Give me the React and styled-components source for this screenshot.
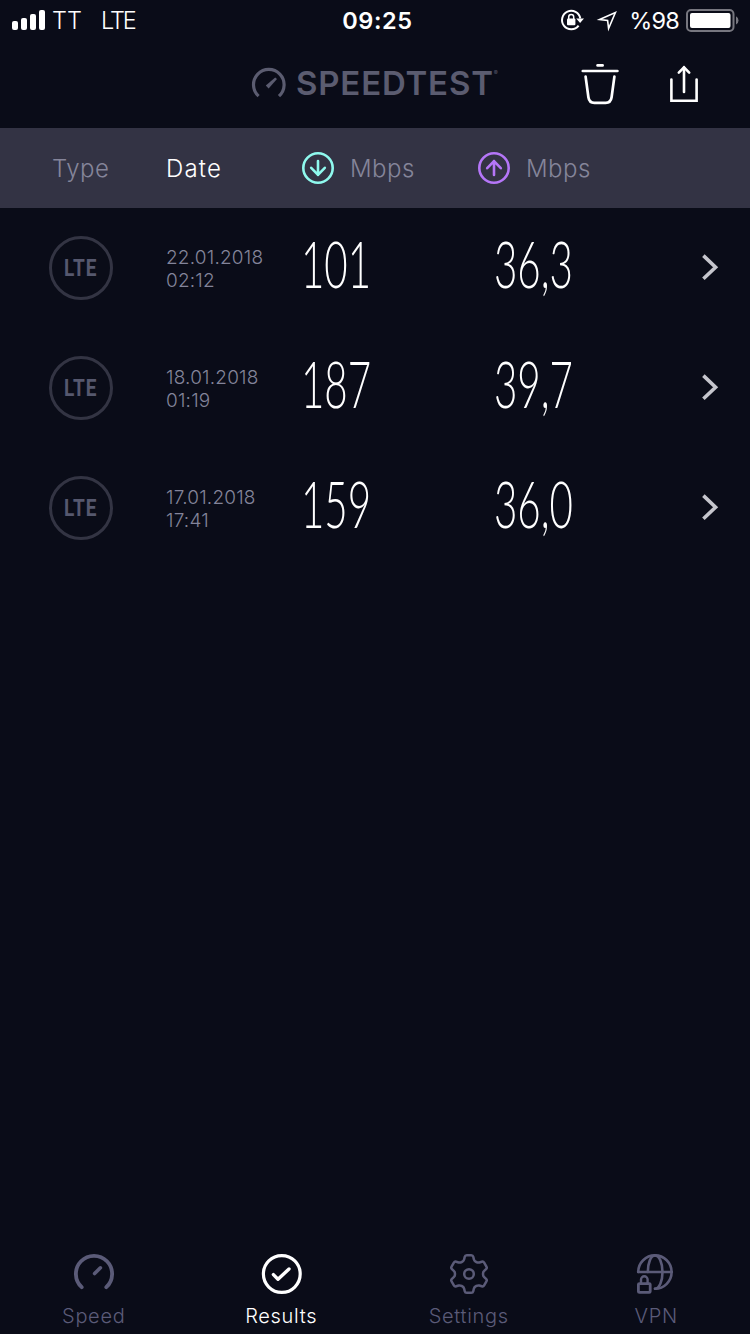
import React from 'react';
import styled, { createGlobalStyle, ThemeProvider } from 'styled-components';

const theme = {
  fontFamily: '"Inter", "Liberation Sans", sans-serif',
  numberFamily: '"Lato", "Liberation Sans", sans-serif',
  badgeFamily: '"Roboto", "Liberation Sans", sans-serif',
  colors: {
    background: '#0a0c18',
    bar: '#333344',
    white: '#ffffff',
    barText: '#85859a',
    date: '#83849a',
    logo: '#5b5c70',
    ring: '#333443',
    badge: '#56586e',
    tab: '#5b5b78',
    chevron: '#c6c6cd',
    download: '#8ff9ee',
    upload: '#b576f8',
  },
};

const RESULTS = [
  { type: 'LTE', date: '22.01.2018', time: '02:12', down: '101', up: '36,3' },
  { type: 'LTE', date: '18.01.2018', time: '01:19', down: '187', up: '39,7' },
  { type: 'LTE', date: '17.01.2018', time: '17:41', down: '159', up: '36,0' },
];

// one tooth and the valley after it, repeated six times around the hub
const GEAR_POINTS = [
  [-5.2, -13.2],
  [-3.9, -18.8],
  [3.9, -18.8],
  [5.2, -13.2],
];

const getGearPath = () => {
  const points = [];
  for (let i = 0; i < 6; i++) {
    const a = (i * Math.PI) / 3;
    GEAR_POINTS.forEach(([x, y]) => {
      points.push([
        x * Math.cos(a) - y * Math.sin(a),
        x * Math.sin(a) + y * Math.cos(a),
      ]);
    });
  }

  const toward = (from, to, distance) => {
    const length = Math.hypot(to[0] - from[0], to[1] - from[1]);
    const t = distance / length;
    return [from[0] + (to[0] - from[0]) * t, from[1] + (to[1] - from[1]) * t];
  };

  return (
    points
      .map((point, i) => {
        const prev = points[(i + points.length - 1) % points.length];
        const next = points[(i + 1) % points.length];
        const start = toward(point, prev, 1.6);
        const end = toward(point, next, 1.6);
        return `${i ? 'L' : 'M'}${start} Q${point} ${end}`;
      })
      .join(' ') + 'Z'
  );
};

const SignalIcon = () => (
  <Icon width="33" height="20" viewBox="12 10 33 20">
    <g fill="currentColor">
      <rect x="12" y="21" width="6" height="9" rx="2" />
      <rect x="21" y="18" width="6" height="12" rx="2" />
      <rect x="30" y="14" width="6" height="16" rx="2" />
      <rect x="39" y="10" width="6" height="20" rx="2" />
    </g>
  </Icon>
);

const LockRotationIcon = () => (
  <Icon width="24" height="22" viewBox="562 9 24 22">
    <path
      d="M580.6 25.6A9.2 9.2 0 1 1 582.3 18.5"
      stroke="currentColor"
      strokeWidth="2"
    />
    <path d="M578.2 18.5H586L582.1 23Z" fill="currentColor" />
    <rect x="569" y="18.6" width="8.4" height="6.6" rx="1" fill="currentColor" />
    <path
      d="M570.7 19V17a2.5 2.5 0 0 1 5 0V19"
      stroke="currentColor"
      strokeWidth="1.5"
    />
  </Icon>
);

const LocationIcon = () => (
  <Icon width="20" height="21" viewBox="598 9.5 20 21">
    <path
      d="M600.6 19L616.4 12L609.6 28L608.6 20Z"
      stroke="currentColor"
      strokeWidth="1.6"
    />
  </Icon>
);

const BatteryIcon = () => (
  <Icon width="53" height="24" viewBox="686 8 53 24">
    <rect
      x="687"
      y="10"
      width="46.5"
      height="21"
      rx="4"
      stroke="#77777f"
      strokeWidth="2"
    />
    <rect x="690" y="13" width="40.5" height="15" rx="2" fill="currentColor" />
    <path d="M736 16.3a4.6 4.6 0 0 1 0 8.2Z" fill="#77777f" />
  </Icon>
);

const GaugeLogo = () => (
  <Icon width="34" height="30" viewBox="252 68 34 30">
    <path
      d="M258.6 95.1A15.3 15.3 0 1 1 279 95.1"
      stroke="currentColor"
      strokeWidth="3.2"
    />
    <path d="M265.8 84.6L275.2 76.4L277 78.1L268.6 87.6Z" fill="currentColor" />
  </Icon>
);

const TrashIcon = () => (
  <Icon width="38" height="42" viewBox="581 63 38 42">
    <g stroke="currentColor" strokeWidth="2.7" strokeLinecap="round">
      <path d="M597.6 65.4H602.6" />
      <path d="M582.8 71H617.4" />
      <path d="M585.6 76.6L588.4 97.2Q589.2 102.8 594.4 102.8H605.6Q610.8 102.8 611.6 97.2L614.4 76.6" />
    </g>
  </Icon>
);

const ShareIcon = () => (
  <Icon width="30" height="38" viewBox="669 65 30 38">
    <g stroke="currentColor" strokeWidth="2.6" strokeLinecap="round">
      <path d="M671.4 79.5V100.8H696.6V79.5" />
      <path d="M684 67.5V92" />
      <path d="M678.8 72.6L684 67.4L689.2 72.6" />
    </g>
  </Icon>
);

const ArrowIcon = ({ up }) => (
  <Icon width="32" height="32" viewBox="-16 -16 32 32">
    <circle r="14.7" stroke="currentColor" strokeWidth="2.6" />
    <path
      d={up ? 'M0 7V-7M-6.8 .2L0 -6.8L6.8 .2' : 'M0 -7V7M-6.8 -.2L0 6.8L6.8 -.2'}
      stroke="currentColor"
      strokeWidth="2.6"
      strokeLinecap="round"
      strokeLinejoin="round"
    />
  </Icon>
);

const ChevronIcon = () => (
  <Icon width="18" height="28" viewBox="701 254 18 28">
    <path
      d="M703.4 255.6L715.6 267.2L703.4 278.8"
      stroke="currentColor"
      strokeWidth="3.6"
    />
  </Icon>
);

const SpeedIcon = () => (
  <Icon width="42" height="42" viewBox="-21 -21 42 42">
    <g stroke="currentColor" strokeLinecap="round">
      <path d="M-12.3 13.2A18.1 18.1 0 1 1 12.3 13.2" strokeWidth="3.8" />
      <path d="M.6 -.4L6.4 -6.2" strokeWidth="3.6" />
    </g>
  </Icon>
);

const ResultsIcon = () => (
  <Icon width="42" height="42" viewBox="-21.8 -21 42 42">
    <circle r="18.4" stroke="currentColor" strokeWidth="3.2" />
    <path
      d="M-8.4 .6L-3.8 5.2L7.2 -5"
      stroke="currentColor"
      strokeWidth="3.4"
      strokeLinecap="round"
      strokeLinejoin="round"
    />
  </Icon>
);

const SettingsIcon = () => (
  <Icon width="42" height="42" viewBox="-21 -21 42 42">
    <path d={getGearPath()} stroke="currentColor" strokeWidth="2.5" />
    <circle r="4.8" stroke="currentColor" strokeWidth="2.5" />
  </Icon>
);

const VpnIcon = () => (
  <Icon width="42" height="42" viewBox="635.2 1253 42 42">
    <g stroke="currentColor" strokeWidth="2.6" strokeLinecap="round">
      <path d="M638.4 1272A16.7 16.7 0 1 1 655.2 1288.8" />
      <path d="M638.4 1272H672" />
      <path d="M648 1272C648 1263 651 1255.5 655.1 1255.5C659.5 1255.5 662.7 1263 662.7 1272C662.7 1281 659.5 1288.6 655.2 1288.8" />
    </g>
    <rect
      x="638.6"
      y="1283.6"
      width="11.8"
      height="8.8"
      rx="1"
      stroke="currentColor"
      strokeWidth="2.8"
    />
    <path
      d="M641.2 1283V1279.6a3.3 3.3 0 0 1 6.6 0V1283"
      stroke="currentColor"
      strokeWidth="2.4"
    />
  </Icon>
);

const TABS = [
  { label: 'Speed', icon: SpeedIcon },
  { label: 'Results', icon: ResultsIcon, isActive: true },
  { label: 'Settings', icon: SettingsIcon },
  { label: 'VPN', icon: VpnIcon },
];

const App = () => (
  <ThemeProvider theme={theme}>
    <GlobalStyle />
    <Screen>
      <StatusBar>
        <StatusLeft>
          <SignalIcon />
          <Carrier>TT</Carrier>
          <Network>LTE</Network>
        </StatusLeft>
        <Clock>09:25</Clock>
        <StatusRight>
          <StatusIcons>
            <LockRotationIcon />
            <LocationIcon />
          </StatusIcons>
          <Percent>%98</Percent>
          <BatteryIcon />
        </StatusRight>
      </StatusBar>

      <Header>
        <Logo>
          <GaugeLogo />
          <LogoText>SPEEDTEST</LogoText>
          <Registered>®</Registered>
        </Logo>
        <Actions>
          <TrashIcon />
          <ShareIcon />
        </Actions>
      </Header>

      <ColumnBar>
        <ColumnLabel>Type</ColumnLabel>
        <ColumnLabel $isActive>Date</ColumnLabel>
        <UnitLabel $color="download">
          <ArrowIcon />
          <ColumnLabel>Mbps</ColumnLabel>
        </UnitLabel>
        <UnitLabel $color="upload">
          <ArrowIcon up />
          <ColumnLabel>Mbps</ColumnLabel>
        </UnitLabel>
      </ColumnBar>

      <ResultList>
        {RESULTS.map(({ type, date, time, down, up }) => (
          <ResultRow key={date}>
            <Badge>
              <span>{type}</span>
            </Badge>
            <DateCell>
              <div>{date}</div>
              <div>{time}</div>
            </DateCell>
            <Speed>{down}</Speed>
            <Speed $inset={17}>{up}</Speed>
            <ChevronIcon />
          </ResultRow>
        ))}
      </ResultList>

      <TabBar>
        {TABS.map(({ label, icon: TabIcon, isActive }) => (
          <Tab key={label} $isActive={isActive}>
            <TabIcon />
            <TabLabel>{label}</TabLabel>
          </Tab>
        ))}
      </TabBar>
    </Screen>
  </ThemeProvider>
);

const GlobalStyle = createGlobalStyle`
  * {
    box-sizing: border-box;
  }

  body {
    margin: 0;
    background: ${theme.colors.background};
  }
`;

const Icon = styled.svg.attrs({ fill: 'none' })`
  display: block;
  flex: none;
  overflow: visible;
`;

const Screen = styled.div`
  display: flex;
  flex-direction: column;
  width: 750px;
  height: 1334px;
  overflow: hidden;
  background: ${(props) => props.theme.colors.background};
  color: ${(props) => props.theme.colors.white};
  font-family: ${(props) => props.theme.fontFamily};
`;

const StatusBar = styled.div`
  display: grid;
  grid-template-columns: 1fr auto 1fr;
  align-items: center;
  height: 40px;
  padding: 0 11px 0 12px;
  font-size: 23.5px;
  line-height: 38px;

  span {
    padding-top: 2px;
  }
`;

const StatusLeft = styled.div`
  display: flex;
  align-items: center;
  font-weight: 300;
`;

const Carrier = styled.span`
  margin-left: 7px;
`;

const Network = styled.span`
  margin-left: 19px;
  letter-spacing: -2px;
`;

const Clock = styled.div`
  margin-left: 4px;
  padding-top: 2px;
  font-weight: 600;
  letter-spacing: 0.6px;
`;

const StatusRight = styled.div`
  display: flex;
  align-items: center;
  justify-content: flex-end;
`;

const StatusIcons = styled.div`
  display: flex;
  align-items: center;
  gap: 13px;
`;

const Percent = styled.span`
  margin: 0 7px 0 12px;
  font-weight: 400;
  letter-spacing: -0.8px;
`;

const Header = styled.header`
  display: flex;
  align-items: center;
  justify-content: space-between;
  height: 88px;
  padding: 0 51px 0 252px;
`;

const Logo = styled.div`
  display: flex;
  align-items: center;
  padding-bottom: 2px;
  color: ${(props) => props.theme.colors.logo};

  svg {
    margin-top: 2px;
  }
`;

const LogoText = styled.span`
  margin-left: 10px;
  font-size: 33px;
  font-weight: 600;
  line-height: 40px;
  letter-spacing: 0.8px;
`;

const Registered = styled.span`
  align-self: flex-start;
  font-size: 6px;
  line-height: 20px;
`;

const Actions = styled.div`
  display: flex;
  align-items: center;
  gap: 50px;
`;

const ColumnBar = styled.div`
  display: grid;
  grid-template-columns: 114px 136px 176px 1fr;
  align-items: center;
  height: 80px;
  padding-left: 52px;
  background: ${(props) => props.theme.colors.bar};
  color: ${(props) => props.theme.colors.barText};
`;

const ColumnLabel = styled.div`
  padding-top: 1px;
  color: ${(props) => props.$isActive && props.theme.colors.white};
  font-size: 24px;
  font-weight: 300;
  letter-spacing: ${(props) => (props.$isActive ? 1.2 : 0.5)}px;
  line-height: 30px;
`;

const UnitLabel = styled.div`
  display: flex;
  align-items: center;
  gap: 16px;

  svg {
    color: ${(props) => props.theme.colors[props.$color]};
  }
`;

const ResultList = styled.main`
  flex: 1;
`;

const ResultRow = styled.div`
  display: grid;
  grid-template-columns: 117px 136px 176px 1fr auto;
  align-items: center;
  height: 120px;
  padding: 0 31px 0 49px;

  > svg {
    color: ${(props) => props.theme.colors.chevron};
  }
`;

const Badge = styled.div`
  display: flex;
  align-items: center;
  justify-content: center;
  width: 64px;
  height: 64px;
  border: 3px solid ${(props) => props.theme.colors.ring};
  border-radius: 50%;
  color: ${(props) => props.theme.colors.badge};
  font-family: ${(props) => props.theme.badgeFamily};
  font-size: 23.5px;
  font-weight: 700;
  letter-spacing: 1.2px;

  span {
    transform: scaleX(0.81);
  }
`;

const DateCell = styled.div`
  padding-top: 2px;
  color: ${(props) => props.theme.colors.date};
  font-size: 19px;
  font-weight: 300;
  line-height: 23px;
  letter-spacing: 0.2px;
`;

const Speed = styled.div`
  justify-self: start;
  margin: 0 0 10px ${(props) => (props.$inset || 0) - 1}px;
  font-family: ${(props) => props.theme.numberFamily};
  font-size: 65px;
  font-weight: 300;
  line-height: 80px;
  transform: scaleX(0.62);
  transform-origin: left;
`;

const TabBar = styled.nav`
  display: grid;
  grid-template-columns: repeat(4, 1fr);
  height: 81px;
`;

const Tab = styled.div`
  display: flex;
  flex-direction: column;
  align-items: center;
  color: ${(props) =>
    props.$isActive ? props.theme.colors.white : props.theme.colors.tab};
`;

const TabLabel = styled.div`
  margin-top: 8px;
  font-size: 20px;
  font-weight: 300;
  line-height: 26px;
  letter-spacing: 0.7px;
`;

export default App;
